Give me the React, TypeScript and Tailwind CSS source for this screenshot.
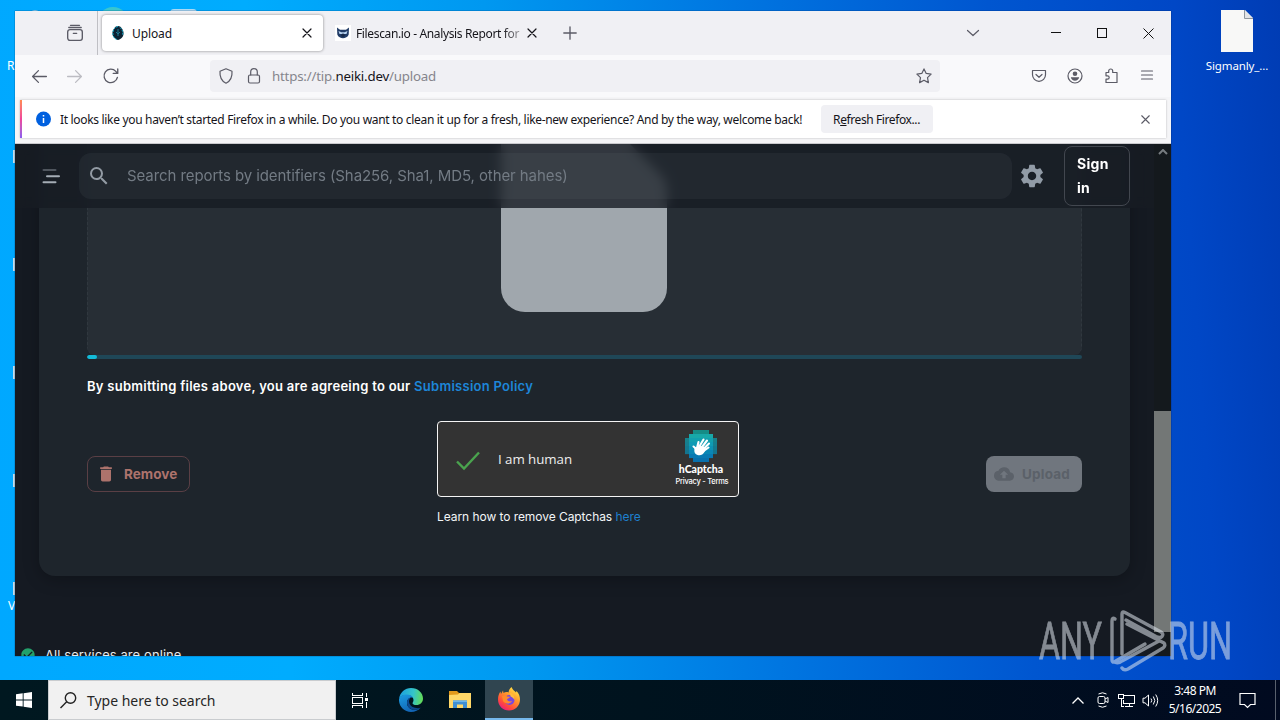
import type { ReactNode } from 'react';
import { MdCheckCircle, MdCloudUpload, MdDelete, MdSearch, MdSettings } from 'react-icons/md';

const UI = "font-['Noto_Sans','Open_Sans',sans-serif]";
const WEB = "font-['Inter','Liberation_Sans',sans-serif]";

function Icon({ children, className = '', size = 16 }: { children: ReactNode; className?: string; size?: number }) {
  return (
    <svg
      width={size}
      height={size}
      viewBox="0 0 16 16"
      fill="none"
      stroke="currentColor"
      strokeWidth="1.2"
      strokeLinecap="round"
      strokeLinejoin="round"
      className={`shrink-0 ${className}`}
    >
      {children}
    </svg>
  );
}

function CloseIcon({ size = 16 }: { size?: number }) {
  return (
    <Icon size={size}>
      <path d="M4 4l8 8M12 4l-8 8" />
    </Icon>
  );
}

function TabStrip() {
  return (
    <div className="flex h-11 shrink-0 items-center bg-[#f0f0f4] text-[#15141a]">
      <div className="flex h-full w-[83px] shrink-0 items-center justify-end border-r border-[#bfbfc4] pr-[13px] text-[#5b5b66]">
        <Icon size={18}>
          <rect x="1.5" y="5" width="13" height="9.5" rx="2" />
          <path d="M2.5 3.1h11M4 1.2h8M6.5 8.3h3" />
        </Icon>
      </div>
      <div className="ml-[4px] flex h-9 w-[221px] shrink-0 items-center rounded bg-white pr-2 pl-2 shadow-[0_0_3px_rgba(0,0,0,0.45)]">
        <svg width="16" height="16" viewBox="0 0 16 16">
          <path d="M8 1c3 0 5 3.500 5.500 6.500S12 14 8 15C4 14 2 10.500 2.500 7.500S5 1 8 1z" fill="#0b2233" />
          <path d="M8 1.500C4.500 2 3 5 2.800 8s1.500 5.500 4 6.500M10 2.500c2.500 2 3.500 5 2.500 8" fill="none" stroke="#1bb3d1" strokeWidth="1" strokeDasharray="2 1" />
          <path d="M8 4v7M6 7l2 2 2-2" stroke="#1c7892" fill="none" />
        </svg>
        <span className="ml-[6px] flex-1 pt-px text-[12px] tracking-[-0.1px]">Upload</span>
        <CloseIcon />
      </div>
      <div className="ml-3 flex h-9 w-[206px] shrink-0 items-center">
        <div className="flex size-4 items-center bg-white">
          <svg width="16" height="16" viewBox="0 0 16 16">
            <path d="M2 2.500l3 2.200h6L14 2.500l-.3 7C13 12 10 13.300 8 13.300S3 12 2.300 9.500z" fill="#213b66" />
            <path d="M3.500 6l3 1.200h3l3-1.200-1 3H4.500z" fill="#b7d2ef" />
            <circle cx="8" cy="10.200" r="1.700" fill="#182947" />
          </svg>
        </div>
        <span className="ml-[5px] w-[168px] bg-linear-to-r from-[#15141a] from-87% to-[#15141a]/25 bg-clip-text pt-px text-[12px] tracking-[-0.36px] whitespace-nowrap text-transparent">
          Filescan.io - Analysis Report for
        </span>
        <CloseIcon />
      </div>
      <Icon size={18} className="ml-[20px] text-[#5b5b66]">
        <path d="M8 2.500v11M2.500 8h11" />
      </Icon>
      <div className="ml-auto flex items-center">
        <Icon className="mr-[70px] text-[#5b5b66]">
          <path d="M2.500 5.500L8 10.500l5.500-5" />
        </Icon>
        <svg width="11" height="11" className="mr-[35px]" shapeRendering="crispEdges">
          <path d="M0 4.500h10" stroke="#111" />
        </svg>
        <svg width="11" height="11" className="mr-[35px]" shapeRendering="crispEdges">
          <rect x=".5" y=".5" width="9" height="9" fill="none" stroke="#111" />
        </svg>
        <svg width="11" height="11" className="mr-[17px]">
          <path d="M.5.5l10 10M10.500.5l-10 10" stroke="#111" />
        </svg>
      </div>
    </div>
  );
}

function NavBar() {
  return (
    <div className="flex h-[42px] shrink-0 items-center bg-[#f9f9fb] text-[#5b5b66]">
      <Icon size={17} className="ml-[16px]">
        <path d="M1.500 8h13M7 2.500L1.500 8 7 13.500" />
      </Icon>
      <Icon size={17} className="ml-[18px] text-[#bcbcc2]">
        <path d="M1.500 8h13M9 2.500L14.500 8 9 13.500" />
      </Icon>
      <Icon size={18} className="ml-[19px]">
        <path d="M13.700 9.200A6 6 0 1 1 12.300 3.900L14 5.500M14 1.800v3.900h-4" />
      </Icon>
      <div className="ml-[90px] flex h-8 w-[730px] items-center rounded bg-[#f0f0f4] pr-2 pl-2">
        <Icon>
          <path d="M8 .8l6 2.400c.4 5.300-1.300 9.700-6 12C3.300 12.900 1.600 8.500 2 3.200z" />
        </Icon>
        <Icon className="ml-3">
          <rect x="2.500" y="7" width="11" height="8" rx="1.500" />
          <path d="M4.700 7V4a3.300 3.300 0 0 1 6.600 0v3" />
        </Icon>
        <span className="ml-[10px] flex-1 pt-px text-[13.300px] tracking-[-0.200px] text-[#85858c]">
          https://tip.<span className="text-[#15141a]">neiki.dev</span>/upload
        </span>
        <Icon>
          <path d="M8 .9l2.200 4.500 4.900.7-3.600 3.500.9 5L8 12.200l-4.400 2.400.9-5L.9 6.100l4.900-.7z" />
        </Icon>
      </div>
      <div className="ml-auto flex items-center gap-5 pr-4">
        <Icon>
          <path d="M1.500 2.500h13v4.300a6.500 6.500 0 0 1-13 0zM5 6.500l3 2.800 3-2.800" />
        </Icon>
        <Icon>
          <circle cx="8" cy="8" r="7" />
          <circle cx="8" cy="5.700" r="2.300" fill="currentColor" stroke="none" />
          <path d="M3.800 9.300h8.400c-.5 2.300-2.200 3.400-4.200 3.400s-3.700-1.100-4.200-3.400z" fill="currentColor" stroke="none" />
        </Icon>
        <Icon>
          <path d="M5.700 4.500V3a2 2 0 0 1 4 0v1.500h4.300v10H3v-3.300h1.500a1.700 1.700 0 0 0 0-3.400H3V4.500z" />
        </Icon>
        <Icon>
          <path d="M2.500 3h11M2.500 7h11M2.500 11h11" />
        </Icon>
      </div>
    </div>
  );
}

function NotificationBar() {
  return (
    <div className="h-[47px] shrink-0 border-b border-[#c9c9cd] bg-[#f5f5f7] px-[5px] pt-[3px]">
      <div className="flex h-[38px] items-center bg-white shadow-[0_0_2px_rgba(0,0,0,0.25)]">
        <div className="h-full w-[2px] bg-linear-to-b from-[#ff8a50] via-[#f0449a] to-[#8a5cf0]" />
        <svg width="16" height="16" viewBox="0 0 16 16" className="ml-[13px]">
          <circle cx="8.500" cy="8" r="7.500" fill="#0060df" />
          <path d="M8.500 4v1.600M8.500 7v5" stroke="#fff" strokeWidth="1.500" />
        </svg>
        <span className="ml-[9px] w-[742px] pt-px text-[12px] tracking-[-0.32px] whitespace-nowrap text-[#15141a]">
          It looks like you haven’t started Firefox in a while. Do you want to clean it up for a fresh, like-new experience? And by the way, welcome back!
        </span>
        <button className="ml-[19px] h-7 w-28 rounded bg-[#f0f0f4] pt-px pr-px text-[12px] tracking-[-0.4px] whitespace-nowrap text-[#15141a]">
          R<u>e</u>fresh Firefox...
        </button>
        <div className="mr-[13px] ml-auto text-[#5b5b66]">
          <CloseIcon size={15} />
        </div>
      </div>
    </div>
  );
}

function SiteHeader() {
  return (
    <header className="absolute inset-x-0 top-0 flex h-16 items-center bg-[#161b23]/80 backdrop-blur-[6px]">
      <svg width="18" height="16" viewBox="0 0 18 16" className="ml-[27px]">
        <path d="M1.500 2h12" stroke="#50565e" strokeWidth="2" strokeLinecap="round" />
        <path d="M5 8.200h12M1.500 14.300h12" stroke="#a5adb5" strokeWidth="2" strokeLinecap="round" />
      </svg>
      <div className="ml-[19px] flex h-[46px] w-[933px] items-center rounded-xl bg-[#919eab]/8">
        <MdSearch size={24} className="ml-2 text-[#939ba4]" />
        <span className="ml-4 text-[15px] tracking-[-0.08px] whitespace-nowrap text-[#737b84]">
          Search reports by identifiers (Sha256, Sha1, MD5, other hahes)
        </span>
      </div>
      <MdSettings size={28} className="ml-[6px] text-[#919ba6]" />
      <button className="ml-[18px] h-[60px] w-[66px] rounded-lg border border-[#42474f] pl-3 text-left text-[14px] leading-6 font-bold tracking-[0.3px] text-white">
        Sign
        <br />
        in
      </button>
    </header>
  );
}

function HCaptchaLogo() {
  const rows = [
    { x: 8, w: 16, c: '#15a5a0' },
    { x: 4, w: 24, c: '#18a8a8' },
    { x: 0, w: 32, c: '#12a0ae' },
    { x: 0, w: 32, c: '#0f9bb4' },
    { x: 0, w: 32, c: '#0c91b4' },
    { x: 0, w: 32, c: '#0a86b4' },
    { x: 4, w: 24, c: '#0879b2' },
    { x: 8, w: 16, c: '#0870ad' },
  ];
  return (
    <svg width="32" height="32" viewBox="0 0 32 32">
      {rows.map((r, i) => (
        <rect key={i} x={r.x} y={i * 4} width={r.w} height="4.100" fill={r.c} />
      ))}
      <path d="M0 8h4v16H0zM28 8h4v16h-4z" fill="#1d6670" opacity=".55" />
      <path d="M8 0h16v4H8z" fill="#167c75" opacity=".6" />
      <path
        d="M8.500 16.500l3.500 3M12 18l1.500-6M14 17l4.500-7.500M16 18.500l6-8M17.500 20l6.500-6.500M18 21.500l5.500-4"
        stroke="#fff"
        strokeWidth="2.100"
        strokeLinecap="round"
      />
      <path d="M10.500 17.500l4-2 4.500 1.500 1 4c-1.500 3.500-4.500 5-7.500 4-3-1.200-3.500-3-3-7z" fill="#fff" />
    </svg>
  );
}

function Captcha() {
  return (
    <div className="w-[302px]">
      <div className="flex h-[76px] items-center rounded border border-[#f5f5f5] bg-[#333]">
        <svg width="24" height="20" viewBox="0 0 24 20" className="mt-[3px] ml-[18px]">
          <path d="M1 10.500l7 7L23 1.500" fill="none" stroke="#4aa34e" strokeWidth="2.400" />
        </svg>
        <span className="ml-[18px] flex-1 pt-[2px] font-['Open_Sans','Noto_Sans',sans-serif] text-[13.300px] tracking-[-0.050px] text-[#eee]">
          I am human
        </span>
        <div className="mr-[7px] flex w-[60px] flex-col items-center text-white">
          <HCaptchaLogo />
          <span className="mt-px font-['Lato',sans-serif] text-[10.500px] leading-[13px] font-black">hCaptcha</span>
          <span className="pl-[2px] text-[7.500px] leading-[12px] font-medium tracking-[-0.250px] whitespace-nowrap">Privacy - Terms</span>
        </div>
      </div>
      <p className="mt-[10px] mb-px text-[12px] leading-[19px] tracking-[-0.060px] whitespace-nowrap text-[#f3f5f7]">
        Learn how to remove Captchas <a className="text-[#1e80ce]">here</a>
      </p>
    </div>
  );
}

function UploadCard() {
  return (
    <main className="mx-6 h-[432px] w-[1091px] rounded-b-2xl bg-[#1e252c] px-12 shadow-[0_4px_16px_rgba(0,0,0,0.25)]">
      <div className="flex h-[211px] justify-center rounded-b-lg border-x border-dashed border-[#30383f] bg-[#272e35] pr-px">
        <svg width="166" height="168" viewBox="0 0 166 168">
          <path d="M0 0H129L159 30Q166 37 166 47V144a24 24 0 0 1-24 24H24a24 24 0 0 1-24-24z" fill="#a0a7ad" />
        </svg>
      </div>
      <div className="h-1 overflow-hidden rounded-full bg-[#1f4757]">
        <div className="h-full w-[10px] rounded-full bg-[#13bbd8]" />
      </div>
      <p className="mt-4 text-[13px] leading-[22px] font-semibold tracking-[0.270px] text-white">
        By submitting files above, you are agreeing to our <a className="text-[#1d86d8]">Submission Policy</a>
      </p>
      <div className="mt-6 flex items-center justify-between">
        <button className="flex h-9 w-[103px] items-center rounded-lg border border-[#5a3f45] pl-2 text-[13.500px] font-bold tracking-[0.050px] text-[#ad736c]">
          <MdDelete size={20} className="mr-2" />
          Remove
        </button>
        <Captcha />
        <button className="flex h-9 w-24 items-center rounded-lg bg-[#70767e] pl-2 text-[13.500px] font-bold tracking-[0.200px] text-[#5b6169]">
          <MdCloudUpload size={20} className="mr-2" />
          Upload
        </button>
      </div>
    </main>
  );
}

function Page() {
  return (
    <div className={`flex h-[513px] bg-[#151a22] ${WEB}`}>
      <div className="relative h-full w-[1139px] overflow-hidden">
        <UploadCard />
        <footer className="mt-[69px] flex items-center pl-[5px] text-[13px] leading-5 tracking-[0.080px] text-[#e8eaed]">
          <MdCheckCircle size={16} className="mr-[9px] text-[#22a06b]" />
          All services are online
        </footer>
        <SiteHeader />
      </div>
      <div className="flex w-[17px] flex-col items-center bg-[#14191d]">
        <svg width="10" height="6" viewBox="0 0 10 6" className="mt-[5px]">
          <path d="M1 5l4-4 4 4" fill="none" stroke="#777c80" strokeWidth="2" />
        </svg>
        <div className="mt-[256px] h-[221px] w-full bg-[#737776]" />
      </div>
    </div>
  );
}

function Watermark() {
  return (
    <svg width="204" height="66" viewBox="0 0 204 66" className="absolute top-[608px] left-[1036px] opacity-55">
      <g fill="#dfe6ee" stroke="#dfe6ee" strokeWidth="0.800" fontFamily="Roboto, sans-serif" fontSize="51" fontWeight="400">
        <text x="3" y="51" textLength="63" lengthAdjust="spacingAndGlyphs">ANY</text>
        <text x="132" y="51" textLength="64" lengthAdjust="spacingAndGlyphs">RUN</text>
      </g>
      <g fill="none" stroke="#dfe6ee" strokeWidth="3.400" strokeLinecap="round" strokeLinejoin="round">
        <path d="M86 46V6q0-3 3-1.500L125 24q3 2 1 4.500-2 2-6 0L90 12" />
        <path d="M79 11q-3-2-3 2v39q0 3 3 1.500L109 36" />
        <path d="M86 60q2 3 6 1l35-21q3-2 1-5L91 16" />
        <path d="M79 54q3 2 7-1l37-20" />
      </g>
    </svg>
  );
}

function DesktopIcons() {
  return (
    <>
      <div className="absolute top-[10px] left-[1197px] flex w-20 flex-col items-center">
        <svg width="32" height="42" viewBox="0 0 32 42">
          <path d="M0 0h24l8 8v34H0z" fill="#f8f8f7" />
          <path d="M23.500 0v8.500H32" fill="#e3e4e6" stroke="#8f969e" />
        </svg>
        <span className="mt-[6px] text-[11.500px] leading-4 tracking-[-0.100px] text-white">Sigmanly_...</span>
      </div>
      <span className="absolute top-[58px] left-[7px] text-[12px] leading-4 text-white">R</span>
      <span className="absolute top-[598px] left-[8px] text-[12px] leading-4 text-white">V</span>
      {/* icons mostly hidden behind the browser window */}
      <div className="absolute top-[10px] left-[29px] h-3 w-3 rounded-full bg-[#8cd3f5]" />
      <div className="absolute top-[7px] left-[97px] h-8 w-8 rounded-full bg-[#37c6d0]" />
      <div className="absolute top-[9px] left-[170px] h-5 w-[27px] rounded bg-[#a9d9f5]" />
      <div className="absolute top-[150px] left-[13px] flex flex-col gap-[95px]">
        {[0, 1, 2, 3, 4].map((i) => (
          <div key={i} className="h-[13px] w-2 bg-[#c3dcea]" />
        ))}
      </div>
    </>
  );
}

function EdgeIcon() {
  return (
    <svg width="24" height="24" viewBox="0 0 24 24">
      <defs>
        <linearGradient id="edgeTop" x1="0" y1="0.300" x2="1" y2="0.400">
          <stop offset="0" stopColor="#1a9fe0" />
          <stop offset="0.600" stopColor="#35c5c9" />
          <stop offset="1" stopColor="#63dc58" />
        </linearGradient>
        <linearGradient id="edgeBody" x1="0" y1="0" x2="0.500" y2="1">
          <stop offset="0" stopColor="#1b9de2" />
          <stop offset="1" stopColor="#1264b4" />
        </linearGradient>
      </defs>
      <path d="M0 11C.8 4.500 6 0 12 0c7 0 12 5 12 10.500 0 4-3 6.500-6.500 6.500-2.500 0-4-1-4-1.800 0-.7 1-1.200 1-3.200 0-2.800-3-5-6.500-5C4 7 1 8.500 0 11z" fill="url(#edgeTop)" />
      <path d="M0 11c1-2.800 4-4.500 7.500-4.500 3.300 0 5.500 1.300 6.500 3-4-.5-6 2-6 5.500 0 4.500 4.500 8 10 6.500 1.300-.3 2.700-1 3.700-1.700C19.500 22.500 16 24 12 24 5 24-.5 18 0 11z" fill="url(#edgeBody)" />
      <path d="M8 14.500c0 5 4.500 8.300 10 7 1.300-.3 2.700-1 3.700-1.700-4 1.300-11.200-.3-11.700-6.300 0-1.700.8-3 2-4C9.500 9.800 8 12 8 14.500z" fill="#0d4a90" />
    </svg>
  );
}

function ExplorerIcon() {
  return (
    <svg width="22" height="20" viewBox="0 0 22 20">
      <path d="M0 1h8l2 2h12v4H0z" fill="#e29a1c" />
      <path d="M0 5l9-.5 1.500-1.500H22v15H0z" fill="#ffd868" />
      <path d="M4 18v-7.500h14V18h-4v-3.500H8V18z" fill="#3f8fd2" />
      <path d="M4 10.500h14V12H4z" fill="#6db6ea" />
    </svg>
  );
}

function FirefoxIcon() {
  return (
    <svg width="24" height="24" viewBox="0 0 24 24">
      <defs>
        <linearGradient id="fox" x1="0.850" y1="0" x2="0.200" y2="1">
          <stop offset="0" stopColor="#fff04a" />
          <stop offset="0.400" stopColor="#ff9a2c" />
          <stop offset="0.750" stopColor="#ff4a3c" />
          <stop offset="1" stopColor="#e8168b" />
        </linearGradient>
      </defs>
      <path d="M14.500 0c1 2.500 3 4 4.500 5.500l.5-1.500C22 6.500 23 9.500 23 12.500 23 19 18 23.500 12 23.500S1 19 1 12.500C1 9 2 6.500 3.500 4.500L4 7l2-3.500.5 2.500C8 5 10 4.800 11.500 5.500c.2-2 1.200-4 3-5.500z" fill="url(#fox)" />
      <circle cx="12.500" cy="13" r="5" fill="#7548e0" />
      <path d="M5 9c2-1 4-.5 5 .5l3 .3c-.3 1.500-2.500 1.700-3 2.700.5 1.500 2.500 2.500 5 1.500-1.500 3-7 3.500-9 0z" fill="#ff8b2b" />
      <path d="M13 6c3 .5 5 3.500 4.500 7C16.500 11 15 10 13.500 9.500z" fill="#ffbd3a" />
    </svg>
  );
}

function Taskbar() {
  return (
    <div className="flex h-10 shrink-0 items-center bg-linear-to-r from-[#001820] via-[#00131e] to-[#010a20] text-white">
      <div className="flex w-12 justify-center">
        <svg width="16" height="16" viewBox="0 0 16 16" fill="#fff">
          <path d="M0 2.300l6.700-1V7.500H0zM7.600 1.200L16 0v7.500H7.600zM0 8.400h6.700v6.200L0 13.700zM7.600 8.400H16V16l-8.400-1.200z" />
        </svg>
      </div>
      <div className="flex h-full w-72 items-center border border-[#c9cccf] bg-[#f1f1f1] pl-[11px] text-[#262626]">
        <svg width="17" height="17" viewBox="0 0 17 17" fill="none" stroke="#222" strokeWidth="1.400">
          <circle cx="10.500" cy="6" r="5.200" />
          <path d="M6.700 9.800L.5 16" />
        </svg>
        <span className="ml-[10px] text-[14px] tracking-[-0.020px]">Type here to search</span>
      </div>
      <div className="flex w-12 justify-center pr-[2px]">
        <svg width="17" height="17" viewBox="0 0 17 17" fill="none" stroke="#fff" shapeRendering="crispEdges">
          <rect x="1.500" y="5.500" width="10" height="6" />
          <path d="M1.500 1v2.500h10V1M1.500 16v-2.500h10V16M15.500 1v4M15.500 10v6" />
          <path d="M14 6h3v3h-3z" fill="#fff" stroke="none" />
        </svg>
      </div>
      <div className="flex w-[54px] justify-center"><EdgeIcon /></div>
      <div className="flex w-[47px] justify-center pr-1"><ExplorerIcon /></div>
      <div className="flex h-full w-12 items-center justify-center border-b-2 border-[#76b9ed] bg-[#304550]">
        <FirefoxIcon />
      </div>
      <div className="ml-auto flex h-full items-center">
        <svg width="12" height="7" viewBox="0 0 12 7" fill="none" stroke="#fff" strokeWidth="1.300">
          <path d="M.5 6.500L6 1l5.500 5.500" />
        </svg>
        <svg width="12" height="16" viewBox="0 0 12 16" fill="none" stroke="#fff" className="ml-[13px]">
          <rect x="1" y="4.500" width="7" height="7" rx="1.500" />
          <path d="M8 7l3-1.500v5L8 9M1.500 2Q5.500-.5 9.500 2M1.500 14q4 2.500 8 0" />
        </svg>
        <svg width="17" height="15" viewBox="0 0 17 15" fill="none" stroke="#fff" className="ml-[9px]" shapeRendering="crispEdges">
          <path d="M6 2.500h10.500v8H5.500V7M11 10.500v3M7 13.500h8M3.500 6v7.500H6" />
          <rect x=".5" y="1.500" width="5" height="4" />
        </svg>
        <svg width="17" height="15" viewBox="0 0 17 15" fill="none" stroke="#fff" className="ml-[7px]">
          <path d="M1 5.200h2L6.500 2v11L3 9.800H1zM9 5.500q1.500 2 0 4M11.300 3.500q3 4 0 8M13.700 1.500q4 6 0 12" />
        </svg>
        <div className="ml-[8px] flex w-[56px] flex-col items-center text-[12px] leading-[18px] tracking-[-0.500px] whitespace-nowrap">
          <span>3:48 PM</span>
          <span>5/16/2025</span>
        </div>
        <svg width="17" height="17" viewBox="0 0 17 17" fill="none" stroke="#fff" strokeWidth="1.200" className="ml-[16px]">
          <path d="M1 1.500h15v11h-4.500l-3 3-3-3H1z" />
        </svg>
        <div className="ml-[19px] h-full w-[5px] border-l border-[#59616e]" />
      </div>
    </div>
  );
}

export default function App() {
  return (
    <div className={`relative flex h-[720px] w-[1280px] flex-col overflow-hidden ${UI}`}>
      <div className="relative flex-1 overflow-hidden bg-[linear-gradient(86deg,#00a8ff_0%,#00acfe_22%,#0098f0_40%,#0074e0_60%,#0056d0_78%,#0047c6_92%,#003cb4_100%)]">
        <DesktopIcons />
        <div className="absolute top-[11px] left-[15px] flex h-[645px] w-[1156px] flex-col overflow-hidden shadow-[0_0_1px_rgba(0,20,60,0.9)]">
          <TabStrip />
          <NavBar />
          <NotificationBar />
          <Page />
        </div>
        <Watermark />
      </div>
      <Taskbar />
    </div>
  );
}
